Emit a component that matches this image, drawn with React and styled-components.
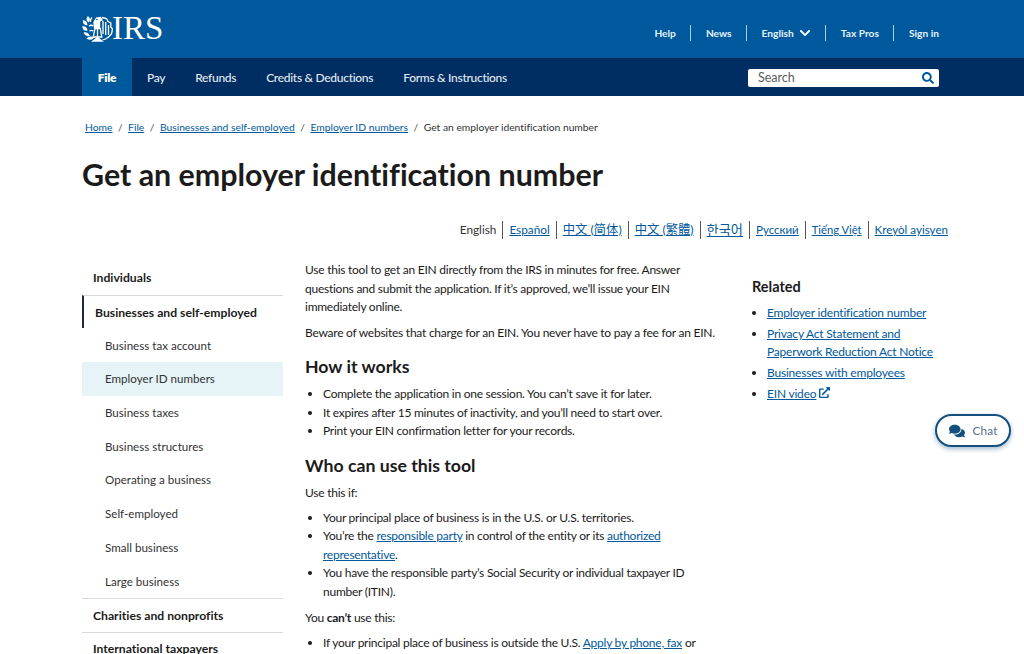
import React from 'react';
import styled, { createGlobalStyle } from 'styled-components';
import { FaChevronDown, FaComments, FaExternalLinkAlt, FaSearch } from 'react-icons/fa';

const FONT = '"Lato", "Noto Sans", "Noto Sans CJK SC", sans-serif';

const GlobalStyle = createGlobalStyle`
  html, body {
    margin: 0;
    height: 654px;
    overflow: hidden;
    background: #fff;
    font-family: ${FONT};
    font-variant-ligatures: none;
    color: #1b1b1b;
  }
  * { box-sizing: border-box; }
`;

const Page = styled.div`
  height: 654px;
  overflow: hidden;
`;

const TopBar = styled.div`
  height: 58px;
  background: #00599c;
  display: flex;
  align-items: center;
  justify-content: space-between;
  padding: 0 85px 0 82px;
`;

const Logo = styled.div`
  display: flex;
  align-items: center;
  gap: 0;
  color: #fff;
  font-family: "Liberation Serif", serif;
  font-size: 33px;
  line-height: 1;
  margin-top: -2px;
  svg { margin-right: -1px; }
`;

const TopLinks = styled.div`
  display: flex;
  align-items: center;
  margin-top: 8px;
`;

const TopLink = styled.a`
  display: flex;
  align-items: center;
  gap: 5px;
  color: #e3f1fa;
  font-size: 10.2px;
  font-weight: 700;
  height: 16px;
  padding: 0 14.5px;
  border-left: ${p => (p.$first ? 'none' : '1px solid #a9d0ea')};
  &:last-child { padding-right: 0; }
`;

const NavBar = styled.div`
  height: 38px;
  background: #002d62;
  display: flex;
  align-items: stretch;
  justify-content: space-between;
  padding: 0 85px 0 82px;
`;

const NavList = styled.div`
  display: flex;
`;

const NavItem = styled.a`
  display: flex;
  align-items: center;
  justify-content: center;
  padding: 0 15px;
  min-width: ${p => (p.$active ? '50px' : '0')};
  background: ${p => (p.$active ? '#00599c' : 'transparent')};
  color: ${p => (p.$active ? '#fff' : '#e3e9f0')};
  font-size: 12px;
  letter-spacing: -0.3px;
  font-weight: ${p => (p.$active ? 800 : 500)};
`;

const SearchBox = styled.div`
  align-self: center;
  width: 191px;
  height: 18px;
  margin-top: 1px;
  background: #fff;
  border-radius: 2px;
  display: flex;
  align-items: center;
  justify-content: space-between;
  padding: 0 5px 0 10px;
  color: #5c5c5c;
  font-size: 12.5px;
`;

const Content = styled.div`
  padding: 0 76px 0 82px;
`;

const Breadcrumbs = styled.div`
  display: flex;
  align-items: center;
  height: 16px;
  margin: 23px 0 0 3px;
  font-size: 10.3px;
  color: #333;
`;

const Crumb = styled.a`
  color: #00599c;
  text-decoration: underline;
`;

const Slash = styled.span`
  margin: 0 5.5px;
  color: #555;
`;

const Title = styled.h1`
  margin: 19px 0 0;
  font-size: 30.4px;
  line-height: 40px;
  font-weight: 700;
  color: #1b1b1b;
`;

const Languages = styled.div`
  display: flex;
  justify-content: flex-end;
  align-items: center;
  margin-top: 27px;
  font-size: 11.8px;
  height: 18px;
`;

const Lang = styled.a`
  padding: 0 6px;
  line-height: 18px;
  font-size: ${p => p.$size || 11.8}px;
  border-left: ${p => (p.$first ? 'none' : '1px solid #555')};
  color: ${p => (p.$first ? '#333' : '#00599c')};
  text-decoration: ${p => (p.$first ? 'none' : 'underline')};
  &:last-child { padding-right: 0; }
`;

const Columns = styled.div`
  display: grid;
  grid-template-columns: 201px 410px 1fr;
  column-gap: 22px;
  margin-top: 22px;
`;

const SideNav = styled.nav`
  display: flex;
  flex-direction: column;
`;

const SideHead = styled.a`
  display: flex;
  align-items: center;
  height: 33.7px;
  padding-left: 11px;
  font-size: 12.2px;
  font-weight: 700;
  color: #1b1b1b;
  border-top: ${p => (p.$line ? '1px solid #d9d9d9' : 'none')};
`;

const SideCurrent = styled(SideHead)`
  border-left: 2px solid #1b2a41;
  border-top: 1px solid #d9d9d9;
`;

const SideItem = styled.a`
  display: flex;
  align-items: center;
  height: 33.7px;
  padding-left: 23px;
  font-size: 11.6px;
  color: #333;
  background: ${p => (p.$active ? '#e6f4f8' : 'transparent')};
`;

const Main = styled.main`
  font-size: 12px;
  letter-spacing: -0.25px;
  line-height: 18.5px;
  color: #1b1b1b;
`;

const Para = styled.p`
  margin: ${p => (p.$tight ? '0 0 6.5px' : '0 0 7px')};
`;

const SubHead = styled.h2`
  margin: 14px 0 7px;
  font-size: 17.7px;
  letter-spacing: 0;
  line-height: 22px;
  font-weight: 700;
`;

const List = styled.ul`
  margin: 0 0 8px;
  padding-left: 18px;
`;

const Link = styled.a`
  color: #00599c;
  text-decoration: underline;
`;

const Related = styled.aside`
  padding: 17px 0 0 15px;
  font-size: 12px;
  letter-spacing: -0.2px;
  line-height: 18px;
`;

const RelatedHead = styled.h3`
  margin: 0 0 8px;
  font-size: 14.5px;
  letter-spacing: 0;
  line-height: 18px;
  font-weight: 700;
`;

const RelatedList = styled.ul`
  margin: 0;
  padding-left: 15px;
  li { margin-bottom: 3px; }
`;

const ChatButton = styled.button`
  position: fixed;
  left: 935px;
  top: 414px;
  width: 76px;
  height: 33px;
  border-radius: 17px;
  border: 2px solid #14507e;
  background: #fff;
  box-shadow: 0 2px 5px rgba(20, 80, 126, 0.4);
  display: flex;
  align-items: center;
  justify-content: center;
  gap: 8px;
  padding: 0;
  color: #55708a;
  font-family: ${FONT};
  font-size: 12px;
`;

function Eagle() {
  return (
    <svg width="31" height="27" viewBox="0 0 31 27" fill="none" stroke="#fff" strokeWidth="1.3">
      {/* laurel */}
      <path d="M6 2c1.500 1 1.500 3 .5 4.500C5 5.500 5 3.500 6 2z" fill="#fff" />
      <path d="M1.500 6c2 .2 3 1.500 3.200 3.500C2.700 9.300 1.500 8 1.500 6z" fill="#fff" />
      <path d="M1 12c2 0 3.300 1 3.800 3C3 15.200 1.500 14 1 12z" fill="#fff" />
      <path d="M2.500 18c2-.3 3.500.5 4.500 2.300-2 .5-3.700-.3-4.500-2.300z" fill="#fff" />
      <path d="M5.500 23.500c1.500-1.500 3.500-1.800 5.500-.8-1.500 1.500-3.700 1.800-5.500.8z" fill="#fff" />
      <path d="M10 2.500C8.500 4 8 5.500 8.500 7M7 11c1.500-1 3-1 4.300 0M7.500 16c1.200-.8 2.500-.8 3.800 0" />
      {/* eagle body and wing */}
      <path d="M12 7l2.500-4 4-.5 1.500 2.500-2.500 1.200v6.800h-5z" fill="#fff" />
      <path d="M14 4.500h1.500" stroke="#00599c" strokeWidth="1" />
      <path d="M13 13.500l-1.800 8.500h8.600l-1.500-8.500z" />
      <path d="M15.500 14v8" />
      <path d="M20 2.500l4.500 1 1.500 3 2.800 1.500v4l1.700 2-1 5-3 3-3 2-3 1" />
      <path d="M21 6v13M23.700 7v13M26.500 10v10" />
      {/* scales */}
      <path d="M11 26l4.500-3.500 4.500 3.500z" fill="#fff" />
    </svg>
  );
}

const topLinks = ['Help', 'News', 'English', 'Tax Pros', 'Sign in'];
const navLinks = ['Pay', 'Refunds', 'Credits & Deductions', 'Forms & Instructions'];
const languages = [
  { label: 'Español' },
  { label: '中文 (简体)', size: 12.3 },
  { label: '中文 (繁體)', size: 12.3 },
  { label: '한국어', size: 13.2 },
  { label: 'Русский', size: 11.5 },
  { label: 'Tiếng Việt', size: 11.2 },
  { label: 'Kreyòl ayisyen', size: 11.6 },
];
const sideItems = [
  'Business tax account',
  'Employer ID numbers',
  'Business taxes',
  'Business structures',
  'Operating a business',
  'Self-employed',
  'Small business',
  'Large business',
];

export default function App() {
  return (
    <Page>
      <GlobalStyle />
      <TopBar>
        <Logo>
          <Eagle />
          IRS
        </Logo>
        <TopLinks>
          {topLinks.map((label, i) => (
            <TopLink key={label} $first={i === 0}>
              {label}
              {label === 'English' && <FaChevronDown size={12} color="#fff" />}
            </TopLink>
          ))}
        </TopLinks>
      </TopBar>
      <NavBar>
        <NavList>
          <NavItem $active>File</NavItem>
          {navLinks.map(label => (
            <NavItem key={label}>{label}</NavItem>
          ))}
        </NavList>
        <SearchBox>
          Search
          <FaSearch size={12} color="#00599c" />
        </SearchBox>
      </NavBar>
      <Content>
        <Breadcrumbs>
          <Crumb>Home</Crumb>
          <Slash>/</Slash>
          <Crumb>File</Crumb>
          <Slash>/</Slash>
          <Crumb>Businesses and self-employed</Crumb>
          <Slash>/</Slash>
          <Crumb>Employer ID numbers</Crumb>
          <Slash>/</Slash>
          Get an employer identification number
        </Breadcrumbs>
        <Title>Get an employer identification number</Title>
        <Languages>
          <Lang $first>English</Lang>
          {languages.map(lang => (
            <Lang key={lang.label} $size={lang.size}>{lang.label}</Lang>
          ))}
        </Languages>
        <Columns>
          <SideNav>
            <SideHead>Individuals</SideHead>
            <SideCurrent>Businesses and self-employed</SideCurrent>
            {sideItems.map(label => (
              <SideItem key={label} $active={label === 'Employer ID numbers'}>
                {label}
              </SideItem>
            ))}
            <SideHead $line>Charities and nonprofits</SideHead>
            <SideHead $line>International taxpayers</SideHead>
          </SideNav>
          <Main>
            <Para>
              Use this tool to get an EIN directly from the IRS in minutes for free. Answer questions and submit the
              application. If it’s approved, we’ll issue your EIN immediately online.
            </Para>
            <Para>Beware of websites that charge for an EIN. You never have to pay a fee for an EIN.</Para>
            <SubHead>How it works</SubHead>
            <List>
              <li>Complete the application in one session. You can’t save it for later.</li>
              <li>It expires after 15 minutes of inactivity, and you’ll need to start over.</li>
              <li>Print your EIN confirmation letter for your records.</li>
            </List>
            <SubHead>Who can use this tool</SubHead>
            <Para $tight>Use this if:</Para>
            <List>
              <li>Your principal place of business is in the U.S. or U.S. territories.</li>
              <li>
                You’re the <Link>responsible party</Link> in control of the entity or its{' '}
                <Link>authorized representative</Link>.
              </li>
              <li>You have the responsible party’s Social Security or individual taxpayer ID number (ITIN).</li>
            </List>
            <Para $tight>
              You <b>can’t</b> use this:
            </Para>
            <List>
              <li>
                If your principal place of business is outside the U.S. <Link>Apply by phone, fax</Link> or
              </li>
            </List>
          </Main>
          <Related>
            <RelatedHead>Related</RelatedHead>
            <RelatedList>
              <li><Link>Employer identification number</Link></li>
              <li><Link>Privacy Act Statement and<br />Paperwork Reduction Act Notice</Link></li>
              <li><Link>Businesses with employees</Link></li>
              <li>
                <Link>EIN video</Link> <FaExternalLinkAlt size={11} color="#00599c" />
              </li>
            </RelatedList>
          </Related>
        </Columns>
      </Content>
      <ChatButton>
        <FaComments size={16} color="#14507e" />
        Chat
      </ChatButton>
    </Page>
  );
}
